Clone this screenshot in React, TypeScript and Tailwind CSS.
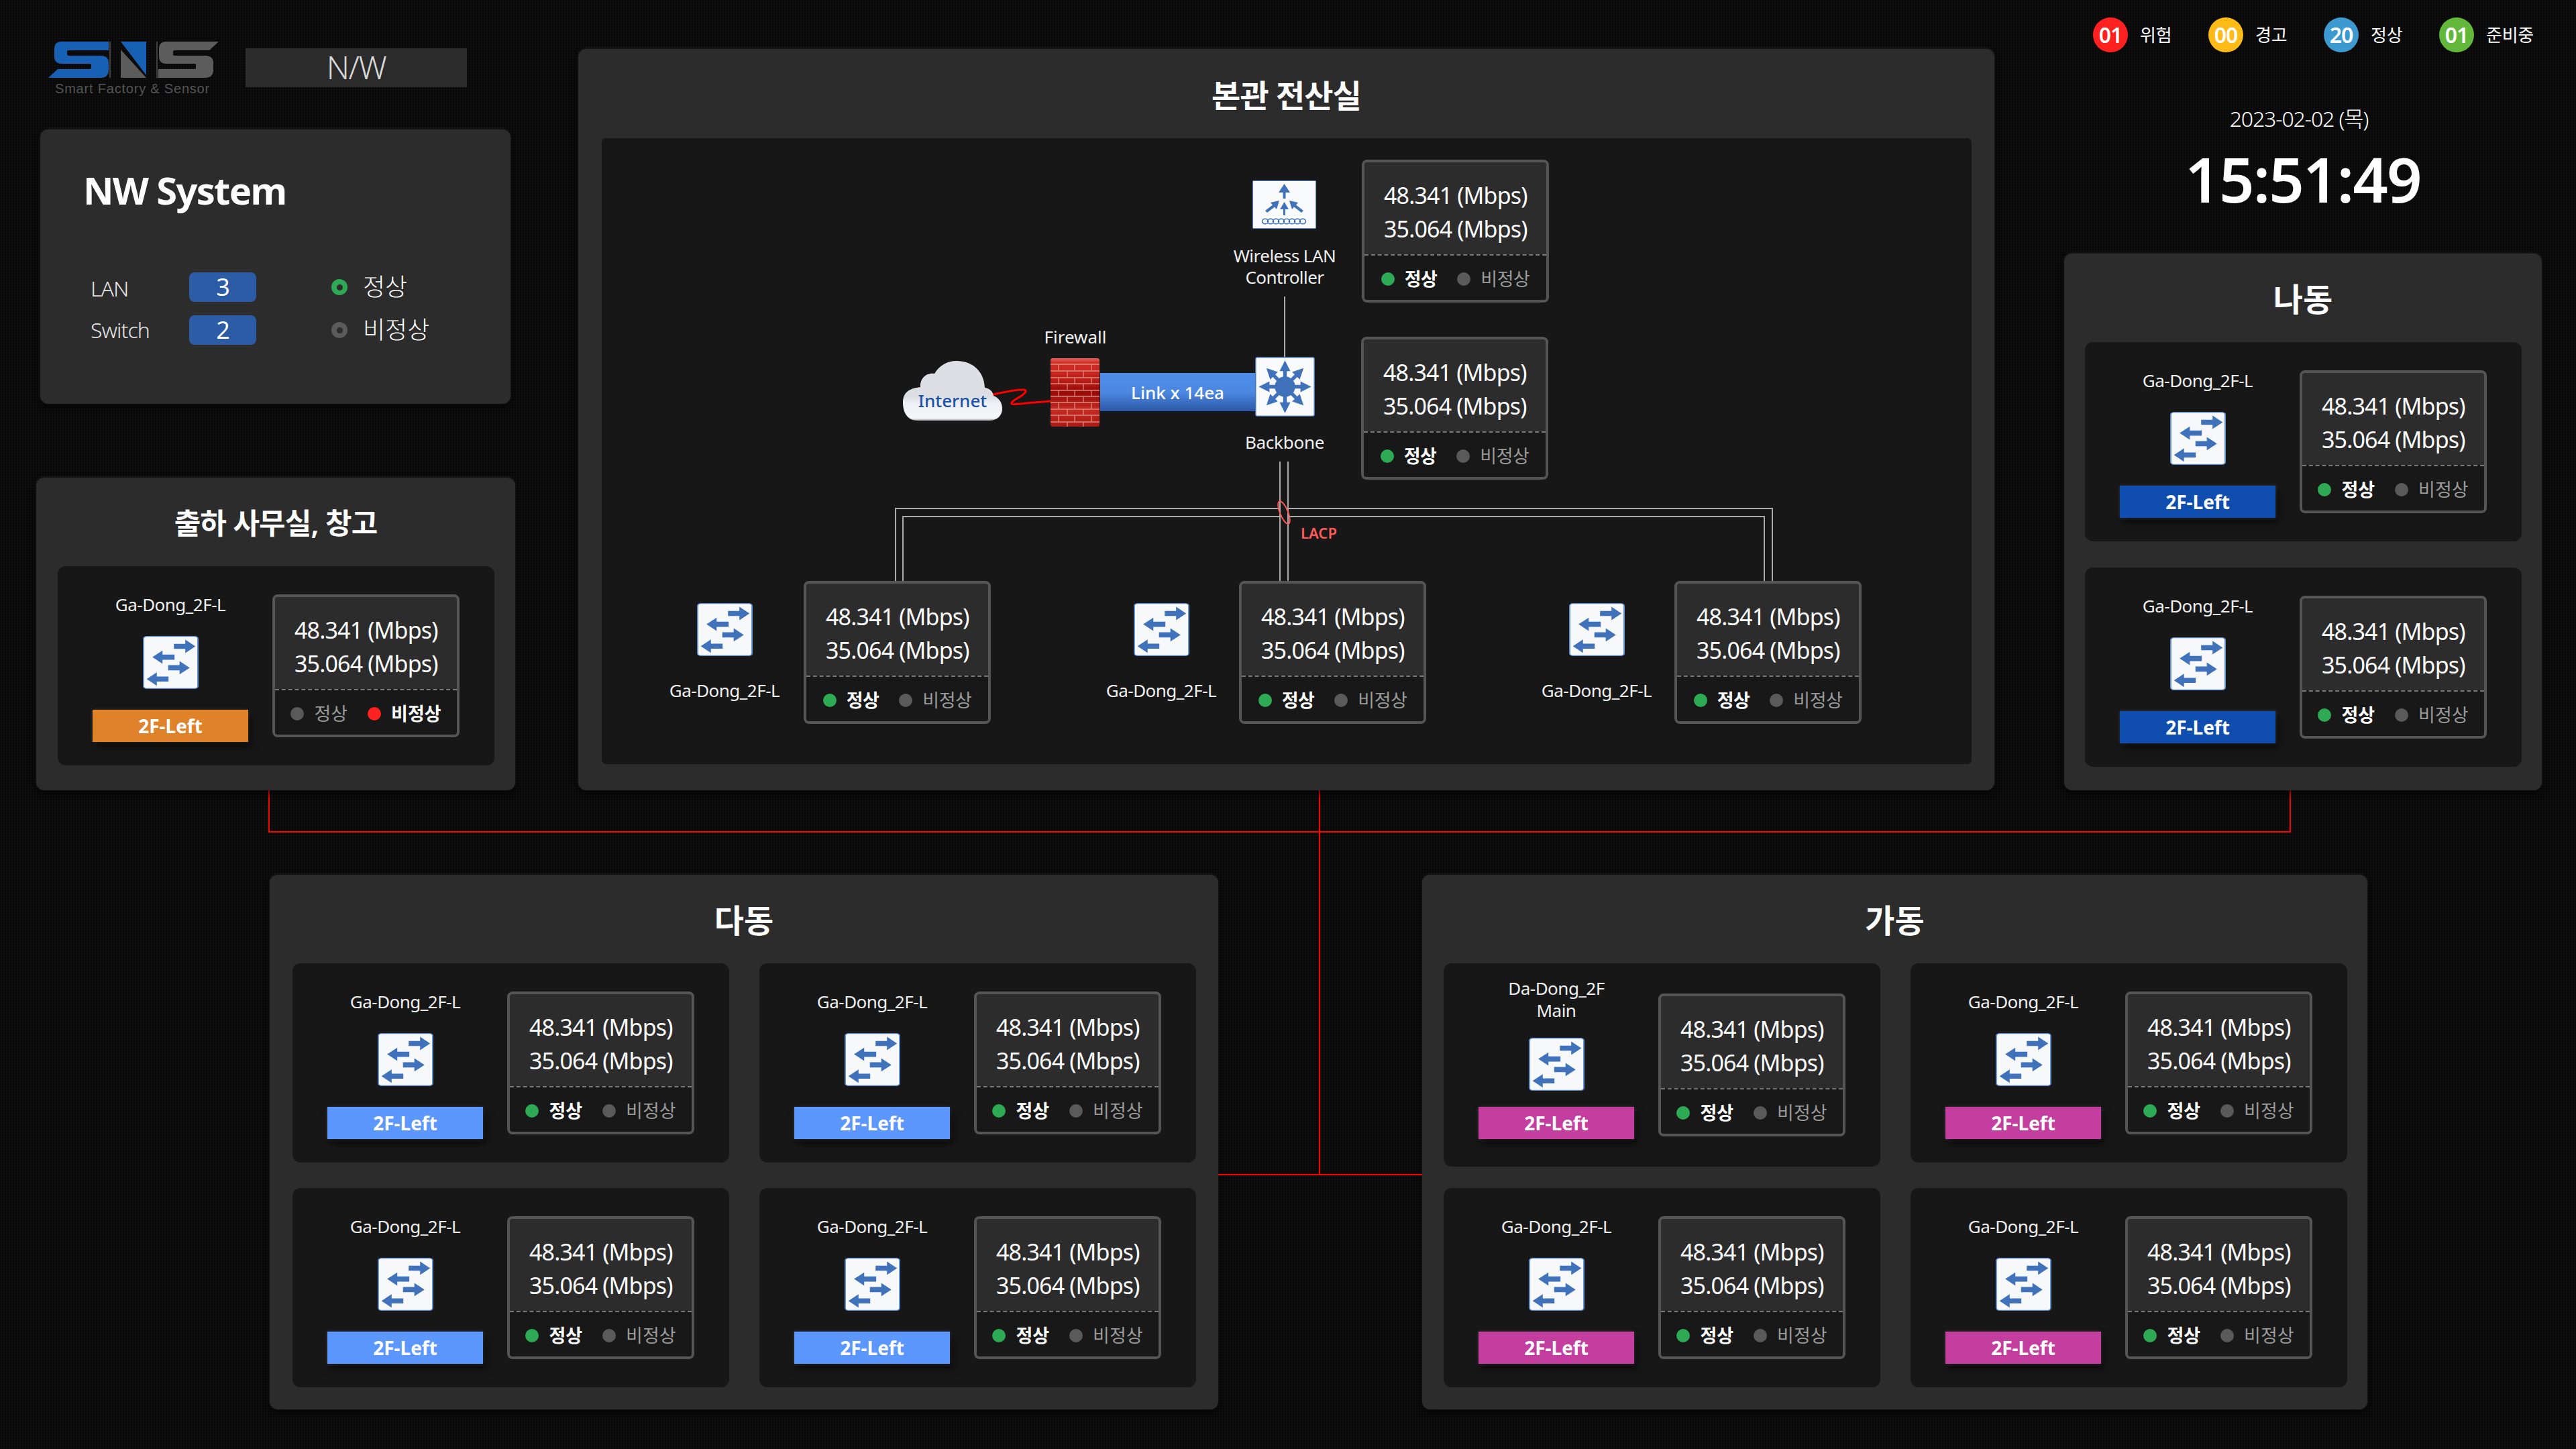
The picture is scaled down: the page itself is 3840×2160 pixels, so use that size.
import React from 'react';

type Tone = 'orange' | 'navy' | 'sky' | 'pink';

const tagTone: Record<Tone, string> = {
  orange: 'bg-[#e0822a]',
  navy: 'bg-[#0f4eae]',
  sky: 'bg-[#5b97ff]',
  pink: 'bg-[#c43e9f]',
};

const panelShadow = 'shadow-[0_-1px_4px_rgba(255,255,255,0.1),0_4px_14px_rgba(0,0,0,0.7)]';

const SwitchIcon = () => (
  <svg width="83" height="79" viewBox="0 0 176 230" preserveAspectRatio="none" className="shrink-0">
    <rect x="2" y="2" width="172" height="226" rx="10" fill="#f7f8fa" stroke="#5a8ad0" strokeWidth="4" />
    <g fill="#3f72bb">
      <path d="M98 34H134V16L166 45L134 74V56H98Z" />
      <path d="M100 81H62V63L30 92L62 121V103H100Z" />
      <path d="M80 127H116V109L148 138L116 167V149H80Z" />
      <path d="M81 176H44V158L12 187L44 216V198H81Z" />
    </g>
  </svg>
);

const BackboneIcon = () => (
  <svg width="89" height="89" viewBox="0 0 100 100" className="absolute left-[974px] top-[326px]">
    <rect x="1" y="1" width="98" height="98" rx="2" fill="#f9fafc" stroke="#5a8ad0" strokeWidth="1.5" />
    <g fill="#3f72bb">
      <circle cx="50" cy="50" r="17" />
      {[0, 45, 90, 135, 180, 225, 270, 315].map((deg) => (
        <path key={deg} d="M47 36V24H41L50 6L59 24H53V36Z" transform={`rotate(${deg} 50 50)`} />
      ))}
    </g>
  </svg>
);

const ControllerIcon = () => (
  <svg width="95" height="72" viewBox="0 0 95 72" className="absolute left-[970px] top-[63px]">
    <rect x="0.5" y="0.5" width="94" height="71" rx="1" fill="#f9fafc" stroke="#5a8ad0" />
    <g fill="#3f72bb">
      <path d="M45.500 27V18H39L47.500 5L56 18H49.500V27Z" />
      <path d="M46 52V43H41L47.500 32L54 43H49V52Z" />
      <path d="M19 45L30 36.500L27 33L40 30L36 43L33 39.500L22 48Z" />
      <path d="M76 45L65 36.500L68 33L55 30L59 43L62 39.500L73 48Z" />
    </g>
    <g fill="none" stroke="#3f72bb" strokeWidth="1.6">
      {[19, 27, 35, 43, 51, 59, 67, 75].map((x) => (
        <ellipse key={x} cx={x} cy="61" rx="4.500" ry="3.800" />
      ))}
    </g>
  </svg>
);

const CloudIcon = () => (
  <svg width="148" height="89" viewBox="0 0 148 89" className="absolute inset-0">
    <defs>
      <linearGradient id="cloudFill" x1="0" y1="0" x2="0" y2="1">
        <stop offset="0" stopColor="#dfe0e5" />
        <stop offset="0.6" stopColor="#dcdee4" />
        <stop offset="0.72" stopColor="#f0f1f6" />
        <stop offset="0.96" stopColor="#f5f6fa" />
        <stop offset="1" stopColor="#9a9a9e" />
      </linearGradient>
    </defs>
    <path
      d="M22 89C6 89 0 76 0 62C0 47 9 41 26 39C25 27 34 17 47 19C54 7 66 0 80 0C102 0 121 14 122 40C130 41 134 46 135 52C143 55 148 62 148 71C148 82 140 89 128 89Z"
      fill="url(#cloudFill)"
    />
  </svg>
);

const FirewallIcon = () => {
  const rows = [9, 19, 29, 38, 48, 57, 66, 76, 85, 95];
  return (
    <svg width="73" height="102" viewBox="0 0 73 102" className="absolute left-[669px] top-[328px]">
      <defs>
        <linearGradient id="brickFill" x1="0" y1="0" x2="0" y2="1">
          <stop offset="0" stopColor="#e2615c" />
          <stop offset="0.07" stopColor="#cf2f27" />
          <stop offset="0.3" stopColor="#bd2019" />
          <stop offset="0.5" stopColor="#980c08" />
          <stop offset="0.75" stopColor="#c42a22" />
          <stop offset="1" stopColor="#a81b14" />
        </linearGradient>
      </defs>
      <rect width="73" height="102" rx="3" fill="url(#brickFill)" />
      <g stroke="#e9a198" strokeWidth="1.300" opacity="0.8">
        {rows.map((y, i) => (
          <g key={y}>
            <line x1="0" x2="73" y1={y} y2={y} />
            {(i % 2 === 0 ? [12, 36, 61] : [25, 49]).map((x) => (
              <line key={x} x1={x} x2={x} y1={y} y2={y + 9} />
            ))}
          </g>
        ))}
      </g>
    </svg>
  );
};

const Logo = () => (
  <div className="w-[254px] shrink-0">
    <svg width="254" height="55" viewBox="0 0 254 55" className="block">
      <path
        d="M20 0H90V13H30Q28 13 28 16V19Q28 21 30 21H78Q90 21 90 32V42Q90 54 78 54H0L14 41H62Q64 41 64 39V35Q64 33 62 33H20Q9 33 9 22V11Q9 0 20 0Z"
        fill="#1760b4"
      />
      <path d="M108 0H146V50Z" fill="#1760b4" />
      <path d="M108 12L146 54H108Z" fill="#5c5c5c" />
      <path
        d="M176 0H254L240 13H188Q186 13 186 16V19Q186 21 188 21H234Q246 21 246 32V42Q246 54 234 54H164V41H218Q220 41 220 39V35Q220 33 218 33H176Q165 33 165 22V11Q165 0 176 0Z"
        fill="#5c5c5c"
      />
      <path d="M92 0V54M162 0V54" stroke="#777" strokeWidth="1" />
    </svg>
    <div className="mt-[6px] pl-[10px] whitespace-nowrap font-['Liberation_Sans',sans-serif] text-[20px] leading-[18px] tracking-[0.04em] text-[#555]">
      Smart Factory &amp; Sensor
    </div>
  </div>
);

const StatBox = ({ fault = false, className = '' }: { fault?: boolean; className?: string }) => (
  <div className={`h-[213px] w-[279px] shrink-0 overflow-hidden rounded-[8px] border-4 border-[#555] bg-[#2c2c2c] ${className}`}>
    <div className="h-[137px] pl-[29px] pt-[24px] text-[34px] leading-[50px] tracking-[-0.025em] whitespace-nowrap text-white">
      <div>48.341 (Mbps)</div>
      <div>35.064 (Mbps)</div>
    </div>
    <div className="flex h-[68px] items-center justify-center gap-[15px] border-t-2 border-dashed border-[#777] bg-[#181818] pt-[3px] text-[27px] leading-none whitespace-nowrap">
      <span className={fault ? 'size-[20px] rounded-full bg-[#5a5a5a]' : 'size-[20px] rounded-full bg-[#2eaa55]'} />
      <span className={fault ? 'mr-[15px] text-[#9a9a9a]' : 'mr-[15px] font-bold text-white'}>정상</span>
      <span className={fault ? 'size-[20px] rounded-full bg-[#ff2020]' : 'size-[20px] rounded-full bg-[#5a5a5a]'} />
      <span className={fault ? 'font-bold text-white' : 'text-[#9a9a9a]'}>비정상</span>
    </div>
  </div>
);

const DeviceCard = ({
  tone,
  fault = false,
  main = false,
}: {
  tone: Tone;
  fault?: boolean;
  main?: boolean;
}) => (
  <div className={`flex w-[651px] items-center gap-[36px] rounded-[12px] bg-[#171717] px-[52px] ${main ? 'h-[303px]' : 'h-[297px]'}`}>
    <div className="flex h-full w-[232px] shrink-0 flex-col items-center">
      {main ? (
        <div className="mt-[21px] mb-[24px] text-center text-[26px] leading-[33px] tracking-[-0.02em] text-[#f0f0f0]">
          Da-Dong_2F
          <br />
          Main
        </div>
      ) : (
        <div className="mt-[40px] mb-[30px] text-[26px] leading-[34px] tracking-[-0.02em] whitespace-nowrap text-[#f0f0f0]">
          Ga-Dong_2F-L
        </div>
      )}
      <SwitchIcon />
      <div
        className={`flex h-[48px] w-[232px] items-center justify-center text-[28px] font-bold text-white shadow-[0_0_5px_rgba(255,255,255,0.15),4px_8px_10px_rgba(0,0,0,0.55)] ${tagTone[tone]} ${main ? 'mt-[24px]' : 'mt-[31px]'}`}
      >
        2F-Left
      </div>
    </div>
    <StatBox fault={fault} />
  </div>
);

const Diagram = () => (
  <div className="relative mx-[35px] h-[933px] w-[2042px] rounded-[6px] bg-[#171717] text-[26px] leading-[32px] tracking-[-0.02em] text-[#f0f0f0]">
    {/* connectors */}
    <svg width="2042" height="933" className="absolute inset-0">
      <g fill="none" stroke="#aaa" strokeWidth="2">
        <path d="M1018 236V326" />
        <path d="M1011 482V660M1023 482V660" />
        <path d="M438 660V552H1011M449 660V564H1011" />
        <path d="M1023 552H1745V660M1023 564H1733V660" />
      </g>
      <ellipse cx="1017" cy="558" rx="6" ry="18" transform="rotate(-22 1017 558)" fill="none" stroke="#ff5a5a" strokeWidth="2" />
      <path d="M583 382C598 379 618 374 629 375C635 376 631 380 627 383C621 388 609 392 611 396C613 398 628 395 669 392" fill="none" stroke="#f00" strokeWidth="3" />
    </svg>

    <div className="absolute left-[1042px] top-[572px] text-[22px] font-semibold text-[#ff5a5a] tracking-normal">LACP</div>

    <ControllerIcon />
    <div className="absolute left-[898px] top-[159px] w-[240px] text-center">
      Wireless LAN
      <br />
      Controller
    </div>
    <StatBox className="absolute left-[1133px] top-[32px]" />

    <div className="absolute left-[606px] top-[280px] w-[200px] text-center tracking-normal">Firewall</div>
    <div className="absolute left-[449px] top-[332px] h-[89px] w-[148px]">
      <CloudIcon />
      <div className="absolute inset-x-0 top-[43px] text-center text-[26px] font-medium tracking-normal text-[#1c52a6]">Internet</div>
    </div>
    <FirewallIcon />
    <div className="absolute left-[743px] top-[350px] flex h-[57px] w-[231px] items-center justify-center bg-[linear-gradient(180deg,#4f8ee8_0%,#4c88e2_50%,#2b58a6_100%)] font-medium tracking-normal text-white">
      Link x 14ea
    </div>
    <BackboneIcon />
    <div className="absolute left-[898px] top-[437px] w-[240px] text-center tracking-[-0.01em]">Backbone</div>
    <StatBox className="absolute left-[1132px] top-[296px]" />

    <div className="absolute left-[142px] top-[693px]"><SwitchIcon /></div>
    <div className="absolute left-[63px] top-[807px] w-[240px] text-center">Ga-Dong_2F-L</div>
    <StatBox className="absolute left-[301px] top-[660px]" />

    <div className="absolute left-[793px] top-[693px]"><SwitchIcon /></div>
    <div className="absolute left-[714px] top-[807px] w-[240px] text-center">Ga-Dong_2F-L</div>
    <StatBox className="absolute left-[950px] top-[660px]" />

    <div className="absolute left-[1442px] top-[693px]"><SwitchIcon /></div>
    <div className="absolute left-[1363px] top-[807px] w-[240px] text-center">Ga-Dong_2F-L</div>
    <StatBox className="absolute left-[1599px] top-[660px]" />
  </div>
);

const SidePanel = ({
  title,
  className = '',
  small = false,
  children,
}: {
  title: string;
  className?: string;
  small?: boolean;
  children: React.ReactNode;
}) => (
  <section className={`rounded-[12px] bg-[#2c2c2c] ${panelShadow} ${className}`}>
    <h2
      className={`flex h-[132px] items-center justify-center pt-[4px] font-semibold text-white ${small ? 'text-[43px] tracking-[-0.02em]' : 'text-[48px]'}`}
    >
      {title}
    </h2>
    {children}
  </section>
);

const legend = [
  { n: '01', label: '위험', color: 'bg-[#ff2020]' },
  { n: '00', label: '경고', color: 'bg-[#ffbb15]' },
  { n: '20', label: '정상', color: 'bg-[#3d9ad1]' },
  { n: '01', label: '준비중', color: 'bg-[#62b83a]' },
];

export default function App() {
  return (
    <div className="relative h-[2160px] w-[3840px] overflow-hidden bg-[#090909] bg-[radial-gradient(#111111_1px,transparent_1px)] bg-[size:4px_4px] font-['Noto_Sans','Noto_Sans_CJK_KR',sans-serif]">
      {/* red trunk lines between the buildings */}
      <div className="absolute left-[400px] top-[1178px] h-[63px] w-[3015px] border-x-2 border-b-2 border-[#f00]" />
      <div className="absolute left-[1966px] top-[1178px] h-[574px] w-[2px] bg-[#f00]" />
      <div className="absolute left-[1816px] top-[1750px] h-[2px] w-[304px] bg-[#f00]" />

      <div className="relative flex h-[1178px]">
        {/* left column */}
        <div className="ml-[54px] flex w-[714px] shrink-0 flex-col pt-[62px]">
          <div className="flex items-start pl-[18px]">
            <Logo />
            <div className="mt-[10px] ml-[40px] flex h-[58px] w-[330px] items-center justify-center bg-[#2b2b2b] pb-[2px] text-[47px] font-light tracking-[-0.03em] text-[#d8d8d8]">
              N/W
            </div>
          </div>

          <section className={`mt-[52px] ml-[6px] h-[409px] w-[701px] rounded-[12px] bg-[#2c2c2c] pt-[55px] pl-[64px] ${panelShadow}`}>
            <h1 className="text-[56px] leading-[70px] font-bold tracking-[-0.03em] text-white">NW System</h1>
            <div className="mt-[88px] ml-[11px] flex h-[44px] items-center text-[32px] font-light tracking-[-0.03em] text-[#e4e4e4]">
              <span className="w-[147px] pt-[4px]">LAN</span>
              <span className="flex h-[44px] w-[100px] items-center justify-center rounded-[8px] bg-[#2d5ca6] text-[36px] font-normal text-white">3</span>
              <span className="ml-[112px] flex size-[24px] items-center justify-center rounded-full bg-[#2eaa55]">
                <span className="size-[9px] rounded-full bg-[#2c2c2c]" />
              </span>
              <span className="ml-[23px] text-[36px] tracking-normal text-white">정상</span>
            </div>
            <div className="mt-[20px] ml-[11px] flex h-[44px] items-center text-[32px] font-light tracking-[-0.03em] text-[#e4e4e4]">
              <span className="w-[147px]">Switch</span>
              <span className="flex h-[44px] w-[100px] items-center justify-center rounded-[8px] bg-[#2d5ca6] text-[36px] font-normal text-white">2</span>
              <span className="ml-[112px] flex size-[24px] items-center justify-center rounded-full bg-[#5a5a5a]">
                <span className="size-[9px] rounded-full bg-[#2c2c2c]" />
              </span>
              <span className="ml-[23px] text-[36px] tracking-normal text-white">비정상</span>
            </div>
          </section>

          <SidePanel title="출하 사무실, 창고" small className="mt-[110px] h-[466px] w-[714px]">
            <div className="px-[32px]">
              <DeviceCard tone="orange" fault />
            </div>
          </SidePanel>
        </div>

        {/* main room */}
        <section className={`mt-[73px] ml-[94px] h-[1105px] w-[2111px] shrink-0 rounded-[12px] bg-[#2c2c2c] ${panelShadow}`}>
          <h2 className="flex h-[133px] items-center justify-center pt-[6px] text-[47px] font-semibold tracking-[-0.02em] text-white">본관 전산실</h2>
          <Diagram />
        </section>

        {/* right column */}
        <div className="ml-[104px] flex w-[712px] shrink-0 flex-col pt-[26px]">
          <div className="flex pl-[43px]">
            {legend.map((item) => (
              <div key={item.label} className="flex w-[172px] shrink-0 items-center gap-[18px]">
                <span className={`flex size-[52px] shrink-0 items-center justify-center rounded-full text-[32px] font-semibold tracking-[-0.03em] text-white ${item.color}`}>
                  {item.n}
                </span>
                <span className="text-[26px] tracking-[-0.01em] whitespace-nowrap text-white">{item.label}</span>
              </div>
            ))}
          </div>
          <div className="mt-[79px] pr-[12px] text-center text-[32px] leading-[40px] font-light tracking-[-0.035em] text-white">2023-02-02 (목)</div>
          <div className="mt-[15px] mb-[2px] text-center text-[92px] leading-[110px] font-semibold tracking-[-0.02em] text-white">15:51:49</div>
          <SidePanel title="나동" className="mt-[54px] h-[800px] w-[712px]">
            <div className="flex flex-col gap-[39px] px-[31px]">
              <DeviceCard tone="navy" />
              <DeviceCard tone="navy" />
            </div>
          </SidePanel>
        </div>
      </div>

      {/* bottom row */}
      <div className="mt-[126px] ml-[402px] flex gap-[304px]">
        <SidePanel title="다동" className="h-[797px] w-[1414px]">
          <div className="grid grid-cols-[651px_651px] gap-x-[45px] gap-y-[38px] pl-[34px]">
            <DeviceCard tone="sky" />
            <DeviceCard tone="sky" />
            <DeviceCard tone="sky" />
            <DeviceCard tone="sky" />
          </div>
        </SidePanel>
        <SidePanel title="가동" className="h-[797px] w-[1409px]">
          <div className="grid grid-cols-[651px_651px] gap-x-[45px] gap-y-[32px] pl-[32px]">
            <DeviceCard tone="pink" main />
            <div className="h-[303px]"><DeviceCard tone="pink" /></div>
            <DeviceCard tone="pink" />
            <DeviceCard tone="pink" />
          </div>
        </SidePanel>
      </div>
    </div>
  );
}
